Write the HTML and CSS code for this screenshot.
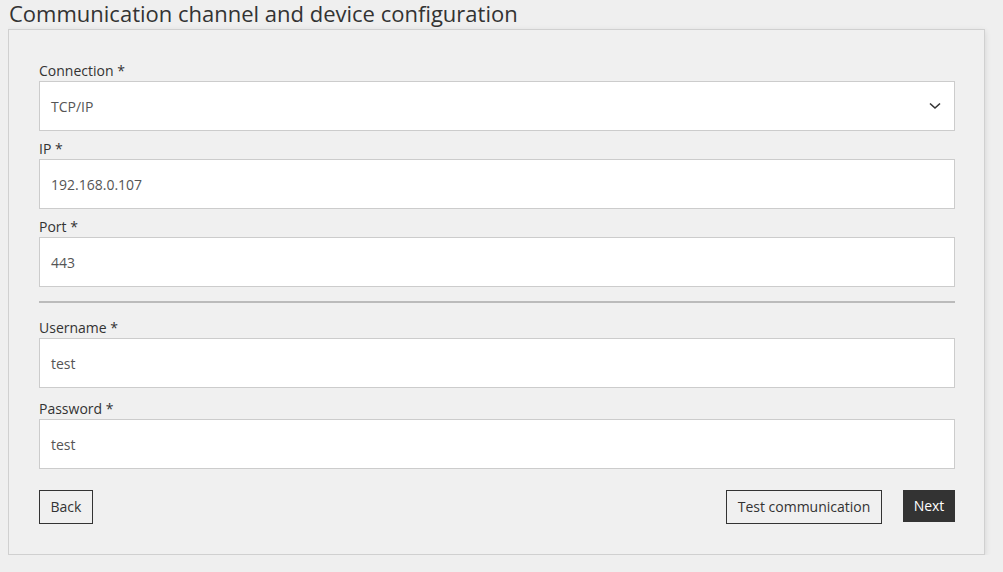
FILE: index.html
```html
<!DOCTYPE html>
<html>
<head>
<meta charset="utf-8">
<link rel="stylesheet" href="styles.css">
</head>
<body>
<h1 class="title">Communication channel and device configuration</h1>
<div class="card">
  <div class="field">
    <label class="label">Connection *</label>
    <div class="input select">
      <span>TCP/IP</span>
      <svg class="chev" width="12" height="8" viewBox="0 0 12 8"><path d="M1 1.5 L6 6 L11 1.5" fill="none" stroke="#333" stroke-width="1.6"/></svg>
    </div>
  </div>
  <div class="field">
    <label class="label">IP *</label>
    <div class="input">192.168.0.107</div>
  </div>
  <div class="field">
    <label class="label">Port *</label>
    <div class="input">443</div>
  </div>
  <hr class="sep">
  <div class="field wide">
    <label class="label">Username *</label>
    <div class="input">test</div>
  </div>
  <div class="field wide">
    <label class="label">Password *</label>
    <div class="input">test</div>
  </div>
  <div class="actions">
    <button class="btn outline back">Back</button>
    <div class="right">
      <button class="btn outline test">Test communication</button>
      <button class="btn primary">Next</button>
    </div>
  </div>
</div>
</body>
</html>
```
FILE: styles.css
```css
html, body {
  background: #efefef;
}
body {
  margin: 0 8px;
  font-family: "Open Sans", "Liberation Sans", sans-serif;
  color: #333;
}
.title {
  margin: 0 0 3px 0;
  font-weight: 400;
  font-size: 22px;
  line-height: 26px;
  color: #333;
  padding-left: 1px;
}
.card {
  margin-right: 10px;
  background: #f0f0f0;
  border: 1px solid #d0d0d0;
  box-shadow: 0 2px 6px rgba(0,0,0,0.12);
  padding: 30px 29px 29px 30px;
  height: 526px;
  box-sizing: border-box;
}
.field {
  display: flex;
  flex-direction: column;
  margin-bottom: 7px;
}
.field.wide {
  margin-bottom: 10px;
}
.label {
  font-size: 14px;
  line-height: 18px;
  padding-top: 2px;
  margin-bottom: 1px;
  color: #333;
}
.input {
  height: 50px;
  box-sizing: border-box;
  background: #fff;
  border: 1px solid #ccc;
  padding: 0 12px 0 11px;
  display: flex;
  align-items: center;
  font-size: 14px;
  color: #555;
}
.select {
  justify-content: space-between;
  padding-right: 13px;
}
.chev {
  display: block;
}
.sep {
  border: 0;
  height: 2px;
  background: #bbb;
  margin: 14px 0 14px 0;
}
.actions {
  display: flex;
  justify-content: space-between;
  align-items: flex-start;
  margin-top: 21px;
}
.right {
  display: flex;
  gap: 21px;
  align-items: flex-start;
}
.btn {
  font-family: "Open Sans", "Liberation Sans", sans-serif;
  font-size: 14px;
  height: 34px;
  padding: 0 11px 1px;
  box-sizing: border-box;
  cursor: pointer;
}
.back {
  width: 54px;
  padding: 0 0 1px;
}
.test {
  width: 156px;
  padding: 0 0 1px;
}
.outline {
  background: transparent;
  border: 1px solid #333;
  color: #333;
}
.primary {
  background: #333;
  color: #fff;
  border: 1px solid #333;
  height: 32px;
  width: 52px;
  padding: 0 0 2px;
}
```
